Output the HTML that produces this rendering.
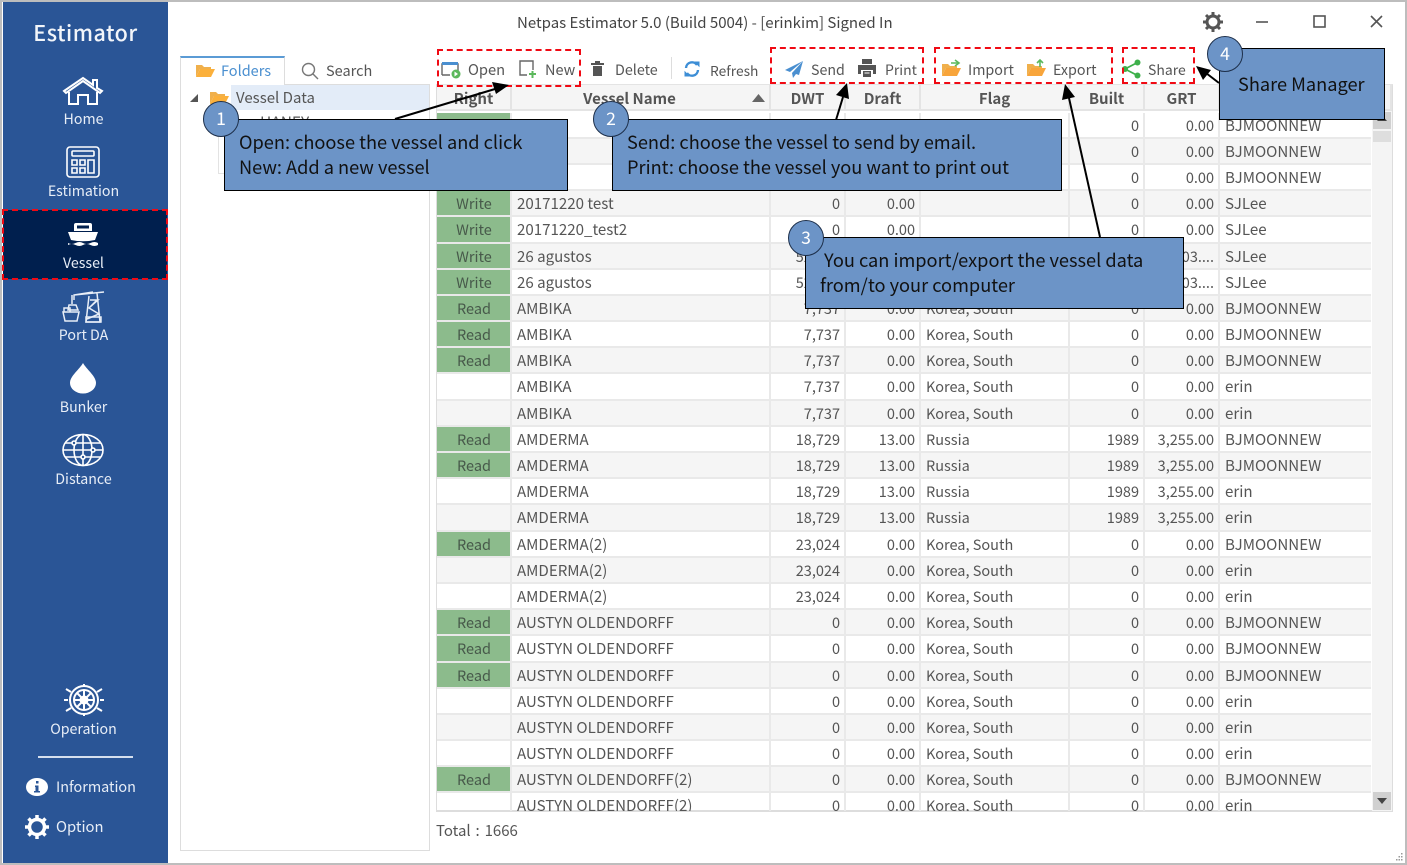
<!DOCTYPE html>
<html><head><meta charset="utf-8"><style>
*{box-sizing:border-box}
html,body{margin:0;padding:0;width:1407px;height:865px;overflow:hidden;background:#fff}
body{position:relative;font-family:"Noto Sans CJK KR","Liberation Sans",sans-serif;color:#555;font-size:14.5px}
.abs{position:absolute;white-space:nowrap;line-height:20px}
#win{position:absolute;left:0;top:0;width:1407px;height:865px;border:2px solid #bdbdbd;pointer-events:none;z-index:1}
#side{position:absolute;left:3px;top:1px;width:165px;height:862px;background:#2a5596}
.nav{position:absolute;left:1px;width:165px;text-align:center;color:#e8eef7;font-size:14.2px;line-height:18px}
#sel{position:absolute;left:3px;top:210px;width:164px;height:69px;background:#001f4e}
svg{position:absolute;overflow:visible}
#rows{position:absolute;left:437px;top:112.6px;width:934px;height:698.400px;overflow:hidden}
.r{height:26.2px;position:relative;border-bottom:2px solid #e9e9e9;line-height:25.400px;white-space:nowrap}
.r:nth-child(even){background:#f5f5f5}
.r span{position:absolute;top:0;height:24.2px;border-right:2px solid #e9e9e9;padding:0 5px;overflow:hidden;display:block}
.a{left:0;width:75px;text-align:center;padding-left:6px!important}
.g .a{background:#8cbb8c;color:#47594a}
.b{left:75px;width:259px;font-size:15.1px;line-height:24.5px}
.c{left:334px;width:75px;text-align:right;padding-right:4px!important}
.d{left:409px;width:75px;text-align:right;padding-right:4px!important}
.e{left:484px;width:149px}
.f{left:633px;width:75px;text-align:right;padding-right:4px!important}
.h{left:708px;width:75px;text-align:right;padding-right:4px!important}
.i{left:783px;width:151px;border-right:0!important;font-size:15.1px;line-height:24.5px}
.hd{position:absolute;top:85px;height:26px;background:#f5f5f5;border-right:2px solid #e4e4e4;border-bottom:2px solid #e4e4e4;text-align:center;font-weight:700;font-size:15px;line-height:27px;color:#555}
.co{position:absolute;background:#6c94c7;border:1.5px solid #000;color:#111;font-size:18.2px;line-height:25.500px;white-space:nowrap;z-index:5}
.ci{position:absolute;width:36px;height:36px;border-radius:50%;background:#6c94c7;border:1.5px solid #1d2f4a;color:#fff;text-align:center;font-size:17.6px;line-height:33px;z-index:6}
.rd{position:absolute;border:2px dashed #f00a14;z-index:4}
</style></head><body>
<div id="side"></div><div id="sel"></div>
<div class="abs" style="left:3px;width:165px;text-align:center;top:20px;line-height:26px;color:#f2f5fa;font-size:21.5px;font-weight:500;letter-spacing:.5px">Estimator</div>

<svg style="left:62px;top:76px" width="42" height="30" fill="none" stroke="#fff" stroke-width="2"><path d="M2 15 21 2l10 7V4h4v8l5 3-2 2-17-12L4 17zM7 16v12h9v-9h10v9h9V16"/></svg>
<div class="nav" style="top:110px">Home</div>
<svg style="left:66px;top:146px" width="34" height="32" fill="none" stroke="#fff" stroke-width="1.6"><rect x="1" y="1" width="32" height="30" rx="3"/><rect x="6" y="5" width="22" height="5" rx="1"/><path d="M6 14h5v5H6zM14 14h5v5h-5zM6 22h5v5H6zM14 22h5v5h-5zM22 14h6v13h-6z"/></svg>
<div class="nav" style="top:182px">Estimation</div>
<svg style="left:67px;top:222px" width="32" height="26" fill="#fff"><path d="M7 9V3q0-2 2-2h14q2 0 2 2v6H7zM10 3.500v3h12v-3z" fill-rule="evenodd"/><path d="M1 10h30l-3 8q-12 2.500-24 0z"/><path d="M1 21q3.500 2 7.500 0t7.500 0 7.500 0 7.500 0v2q-3.500 2-7.500 0t-7.500 0-7.500 0-7.500 0z"/></svg>
<div class="nav" style="top:254px">Vessel</div>
<svg style="left:62px;top:290px" width="44" height="34" fill="none" stroke="#e8eef7" stroke-width="1.5"><path d="M12 10V5l30-3M12 5l19-3M10 5v9M7 15h7l2 5H6zM27 6l-3 26h14L35 3M28 10h8l-9 8 10 6-12 5M35 10l-8 8"/><path d="M2 22v-4h6v4M1 22h16l-2 9H3zM24 27h15v5H24z"/></svg>
<div class="nav" style="top:326px">Port DA</div>
<svg style="left:69px;top:362px" width="28" height="32" fill="#fff"><path d="M14 1C10 8 1 14 1 21a13 10.500 0 0 0 26 0C27 14 18 8 14 1z"/></svg>
<div class="nav" style="top:398px">Bunker</div>
<svg style="left:62px;top:434px" width="42" height="32" fill="none" stroke="#fff" stroke-width="1.6"><ellipse cx="21" cy="16" rx="20" ry="15.500"/><ellipse cx="21" cy="16" rx="9" ry="15.500"/><path d="M21 0v32M3 9h36M1 16h40M3 23h36"/><circle cx="12" cy="9" r="2" fill="#2a5596"/><circle cx="31" cy="16" r="2" fill="#2a5596"/><circle cx="21" cy="23" r="2" fill="#2a5596"/></svg>
<div class="nav" style="top:470px">Distance</div>
<svg style="left:63px;top:684px" width="42" height="32" fill="none" stroke="#fff" stroke-width="2"><circle cx="21" cy="16" r="14"/><circle cx="21" cy="16" r="10"/><circle cx="21" cy="16" r="3.500"/><path d="M21 6v20M11 16h20M14 9l14 14M28 9 14 23M21 0v3M21 29v3M3 5l5 3M39 5l-5 3M3 27l5-3M39 27l-5-3M1 16h4M37 16h4"/></svg>
<div class="nav" style="top:720px">Operation</div>
<div style="position:absolute;left:38px;top:756px;width:95px;height:2px;background:#d5dfee"></div>
<svg style="left:26px;top:778px" width="22" height="18"><ellipse cx="11" cy="9" rx="11" ry="9" fill="#fff"/><path d="M9 7.500h3.500V13H14v1.500H8V13h1.500V9H9zM10 3h2.500v2.500H10z" fill="#2a5596"/></svg>
<div class="abs" style="left:56px;top:777px;color:#e8eef7;font-size:14.400px">Information</div>
<svg style="left:24px;top:815px" width="26" height="24" fill="none" stroke="#fff" stroke-width="3.500"><circle cx="13" cy="12" r="7.500"/><path stroke-width="3.500" d="M13 0v4M13 20v4M1 12h4M21 12h4M4.500 3.500l3 3M18.500 17.500l3 3M4.500 20.500l3-3M18.500 6.500l3-3"/></svg>
<div class="abs" style="left:56px;top:817px;color:#e8eef7;font-size:14.800px">Option</div>

<div class="abs" style="left:517px;top:13px;color:#444;font-size:15px">Netpas Estimator 5.0 (Build 5004) - [erinkim] Signed In</div>
<svg style="left:1202px;top:11px" width="22" height="22" fill="none" stroke="#555" stroke-width="3"><circle cx="11" cy="11" r="6"/><path d="M11 1v4M11 17v4M1 11h4M17 11h4M4 4l3 3M15 15l3 3M4 18l3-3M15 7l3-3"/></svg>
<svg style="left:1255px;top:14px" width="130" height="16" fill="none" stroke="#555" stroke-width="1.600"><path d="M1 8h12"/><rect x="59" y="2" width="11" height="11"/><path d="M116 2l11 11M127 2l-11 11"/></svg>

<div style="position:absolute;left:180px;top:84px;width:250px;height:767px;border:1px solid #ddd"></div>
<div style="position:absolute;left:180px;top:56px;width:105px;height:29px;background:#fff;border:1px solid #ddd;border-top:2px solid #5b9bd5;border-bottom:0"></div>
<svg style="left:196px;top:63px" width="19" height="15"><path d="M0 2h6l2 2h7v2H4L0 14z" fill="#f0b04c"/><path d="M4 6h15l-4 8H0z" fill="#fbb03b"/></svg>
<div class="abs" style="left:221px;top:61px;color:#4a8fd0">Folders</div>
<svg style="left:301px;top:62px" width="18" height="18" fill="none" stroke="#777" stroke-width="1.400"><circle cx="7.500" cy="7.500" r="6"/><path d="M12 12l5 5"/></svg>
<div class="abs" style="left:326px;top:61px">Search</div>
<svg style="left:189px;top:93px" width="10" height="10"><path d="M9 1v8H1z" fill="#555"/></svg>
<svg style="left:210px;top:90px" width="19" height="15"><path d="M0 2h6l2 2h7v2H4L0 14z" fill="#f0b04c"/><path d="M4 6h15l-4 8H0z" fill="#fbb03b"/></svg>
<div style="position:absolute;left:231px;top:85px;width:198px;height:25px;background:#e3ecf8"></div>
<div class="abs" style="left:236px;top:88px;font-size:15px">Vessel Data</div>
<div style="position:absolute;left:218px;top:130px;width:8px;height:44px;border:1px solid #e3e3e3;border-right:0"></div>
<div class="abs" style="left:260px;top:112px;height:9px;overflow:hidden;font-size:15.500px">HANEY</div>

<svg style="left:441px;top:61px" width="20" height="18" fill="none"><path d="M1 14V3h16v7M1 14h8" stroke="#666" stroke-width="1.400"/><path d="M1 2.500h16" stroke="#4a8fd0" stroke-width="3"/><circle cx="15" cy="13" r="4.500" fill="#5cb85c"/><path d="M13.500 10.500v5l3.500-2.500z" fill="#fff"/></svg>
<div class="abs" style="left:468px;top:60px;font-size:14.700px">Open</div>
<svg style="left:519px;top:60px" width="18" height="19" fill="none"><path d="M8 15H1V1h13v9" stroke="#666" stroke-width="1.400"/><path d="M10 14h7M13.500 11v7" stroke="#5cb85c" stroke-width="2"/></svg>
<div class="abs" style="left:545px;top:60px">New</div>
<svg style="left:591px;top:61px" width="14" height="16" fill="#555"><path d="M0 2h13v2H0zM4 0h5v2H4zM2 5h9v10H2z"/></svg>
<div class="abs" style="left:615px;top:60px;font-size:14.300px">Delete</div>
<div style="position:absolute;left:671px;top:57px;width:1px;height:22px;background:#ddd"></div>
<svg style="left:684px;top:61px" width="16" height="16" fill="none" stroke="#3d8ed6" stroke-width="2.400"><path d="M2 7a6 6 0 0 1 11-3M14 9a6 6 0 0 1-11 3"/><path d="M11 1h4v4zM5 15H1v-4z" fill="#3d8ed6" stroke-width="1"/></svg>
<div class="abs" style="left:710px;top:60px;font-size:13.800px">Refresh</div>
<svg style="left:785px;top:61px" width="18" height="17"><path d="M18 0 0 9l5 2zM18 0 7 12l1 5 3-4 3 1z" fill="#4a8fd0"/></svg>
<div class="abs" style="left:811px;top:60px;font-size:14.200px">Send</div>
<svg style="left:858px;top:59px" width="18" height="19" fill="#555"><path fill-rule="evenodd" d="M4 0h10v5H4zM0 6h18v9h-3v-4H3v4H0zM5 12h8v6H5zM6.500 13.500v1h5v-1z"/></svg>
<div class="abs" style="left:885px;top:60px;font-size:14px">Print</div>
<svg style="left:942px;top:60px" width="19" height="17"><path d="M0 4h6l2 2h7v2H4L0 16z" fill="#f0b04c"/><path d="M4 8h15l-4 8H0z" fill="#f8a53b"/><path d="M9 3h7M13 0l4 3-4 3" stroke="#5cb85c" stroke-width="1.600" fill="none"/></svg>
<div class="abs" style="left:968px;top:60px;font-size:14.300px">Import</div>
<svg style="left:1027px;top:60px" width="19" height="17"><path d="M0 4h6l2 2h7v2H4L0 16z" fill="#f0b04c"/><path d="M4 8h15l-4 8H0z" fill="#f8a53b"/><path d="M13 7V1M10 3l3-3 3 3" stroke="#5cb85c" stroke-width="1.600" fill="none"/></svg>
<div class="abs" style="left:1053px;top:60px;font-size:14.300px">Export</div>
<svg style="left:1122px;top:59px" width="20" height="20" fill="#3eb04b"><circle cx="3" cy="10" r="3"/><circle cx="15.500" cy="3.500" r="3"/><circle cx="15.500" cy="16.500" r="3"/><path d="M3 10 15.500 3.500M3 10l12.500 6.500" stroke="#3eb04b" stroke-width="1.800"/></svg>
<div class="abs" style="left:1148px;top:60px;font-size:14px">Share</div>

<div style="position:absolute;left:436px;top:84px;width:957px;height:728px;border:1px solid #ddd;border-top:2px solid #e4e4e4;border-bottom:2px solid #ddd"></div>
<div class="hd" style="left:437px;width:75px">Right</div>
<div class="hd" style="left:512px;width:259px;padding-right:22px">Vessel Name</div>
<svg style="left:752px;top:94px" width="13" height="8"><path d="M0 8 6.500 0 13 8z" fill="#666"/></svg>
<div class="hd" style="left:771px;width:75px">DWT</div>
<div class="hd" style="left:846px;width:75px">Draft</div>
<div class="hd" style="left:921px;width:149px">Flag</div>
<div class="hd" style="left:1070px;width:75px">Built</div>
<div class="hd" style="left:1145px;width:75px">GRT</div>
<div class="hd" style="left:1220px;width:172px"></div>

<div id="rows">
<div class="r g"><span class="a">Read</span><span class="b">2017</span><span class="c">0</span><span class="d">0.00</span><span class="e"></span><span class="f">0</span><span class="h">0.00</span><span class="i">BJMOONNEW</span></div>
<div class="r g"><span class="a">Read</span><span class="b">2017</span><span class="c">0</span><span class="d">0.00</span><span class="e"></span><span class="f">0</span><span class="h">0.00</span><span class="i">BJMOONNEW</span></div>
<div class="r"><span class="a"></span><span class="b">2017</span><span class="c">0</span><span class="d">0.00</span><span class="e"></span><span class="f">0</span><span class="h">0.00</span><span class="i">BJMOONNEW</span></div>
<div class="r g"><span class="a">Write</span><span class="b">20171220 test</span><span class="c">0</span><span class="d">0.00</span><span class="e"></span><span class="f">0</span><span class="h">0.00</span><span class="i">SJLee</span></div>
<div class="r g"><span class="a">Write</span><span class="b">20171220_test2</span><span class="c">0</span><span class="d">0.00</span><span class="e"></span><span class="f">0</span><span class="h">0.00</span><span class="i">SJLee</span></div>
<div class="r g"><span class="a">Write</span><span class="b">26 agustos</span><span class="c">52,000</span><span class="d">0.00</span><span class="e"></span><span class="f">0</span><span class="h">03....</span><span class="i">SJLee</span></div>
<div class="r g"><span class="a">Write</span><span class="b">26 agustos</span><span class="c">52,000</span><span class="d">0.00</span><span class="e"></span><span class="f">0</span><span class="h">03....</span><span class="i">SJLee</span></div>
<div class="r g"><span class="a">Read</span><span class="b">AMBIKA</span><span class="c">7,737</span><span class="d">0.00</span><span class="e">Korea, South</span><span class="f">0</span><span class="h">0.00</span><span class="i">BJMOONNEW</span></div>
<div class="r g"><span class="a">Read</span><span class="b">AMBIKA</span><span class="c">7,737</span><span class="d">0.00</span><span class="e">Korea, South</span><span class="f">0</span><span class="h">0.00</span><span class="i">BJMOONNEW</span></div>
<div class="r g"><span class="a">Read</span><span class="b">AMBIKA</span><span class="c">7,737</span><span class="d">0.00</span><span class="e">Korea, South</span><span class="f">0</span><span class="h">0.00</span><span class="i">BJMOONNEW</span></div>
<div class="r"><span class="a"></span><span class="b">AMBIKA</span><span class="c">7,737</span><span class="d">0.00</span><span class="e">Korea, South</span><span class="f">0</span><span class="h">0.00</span><span class="i">erin</span></div>
<div class="r"><span class="a"></span><span class="b">AMBIKA</span><span class="c">7,737</span><span class="d">0.00</span><span class="e">Korea, South</span><span class="f">0</span><span class="h">0.00</span><span class="i">erin</span></div>
<div class="r g"><span class="a">Read</span><span class="b">AMDERMA</span><span class="c">18,729</span><span class="d">13.00</span><span class="e">Russia</span><span class="f">1989</span><span class="h">3,255.00</span><span class="i">BJMOONNEW</span></div>
<div class="r g"><span class="a">Read</span><span class="b">AMDERMA</span><span class="c">18,729</span><span class="d">13.00</span><span class="e">Russia</span><span class="f">1989</span><span class="h">3,255.00</span><span class="i">BJMOONNEW</span></div>
<div class="r"><span class="a"></span><span class="b">AMDERMA</span><span class="c">18,729</span><span class="d">13.00</span><span class="e">Russia</span><span class="f">1989</span><span class="h">3,255.00</span><span class="i">erin</span></div>
<div class="r"><span class="a"></span><span class="b">AMDERMA</span><span class="c">18,729</span><span class="d">13.00</span><span class="e">Russia</span><span class="f">1989</span><span class="h">3,255.00</span><span class="i">erin</span></div>
<div class="r g"><span class="a">Read</span><span class="b">AMDERMA(2)</span><span class="c">23,024</span><span class="d">0.00</span><span class="e">Korea, South</span><span class="f">0</span><span class="h">0.00</span><span class="i">BJMOONNEW</span></div>
<div class="r"><span class="a"></span><span class="b">AMDERMA(2)</span><span class="c">23,024</span><span class="d">0.00</span><span class="e">Korea, South</span><span class="f">0</span><span class="h">0.00</span><span class="i">erin</span></div>
<div class="r"><span class="a"></span><span class="b">AMDERMA(2)</span><span class="c">23,024</span><span class="d">0.00</span><span class="e">Korea, South</span><span class="f">0</span><span class="h">0.00</span><span class="i">erin</span></div>
<div class="r g"><span class="a">Read</span><span class="b">AUSTYN OLDENDORFF</span><span class="c">0</span><span class="d">0.00</span><span class="e">Korea, South</span><span class="f">0</span><span class="h">0.00</span><span class="i">BJMOONNEW</span></div>
<div class="r g"><span class="a">Read</span><span class="b">AUSTYN OLDENDORFF</span><span class="c">0</span><span class="d">0.00</span><span class="e">Korea, South</span><span class="f">0</span><span class="h">0.00</span><span class="i">BJMOONNEW</span></div>
<div class="r g"><span class="a">Read</span><span class="b">AUSTYN OLDENDORFF</span><span class="c">0</span><span class="d">0.00</span><span class="e">Korea, South</span><span class="f">0</span><span class="h">0.00</span><span class="i">BJMOONNEW</span></div>
<div class="r"><span class="a"></span><span class="b">AUSTYN OLDENDORFF</span><span class="c">0</span><span class="d">0.00</span><span class="e">Korea, South</span><span class="f">0</span><span class="h">0.00</span><span class="i">erin</span></div>
<div class="r"><span class="a"></span><span class="b">AUSTYN OLDENDORFF</span><span class="c">0</span><span class="d">0.00</span><span class="e">Korea, South</span><span class="f">0</span><span class="h">0.00</span><span class="i">erin</span></div>
<div class="r"><span class="a"></span><span class="b">AUSTYN OLDENDORFF</span><span class="c">0</span><span class="d">0.00</span><span class="e">Korea, South</span><span class="f">0</span><span class="h">0.00</span><span class="i">erin</span></div>
<div class="r g"><span class="a">Read</span><span class="b">AUSTYN OLDENDORFF(2)</span><span class="c">0</span><span class="d">0.00</span><span class="e">Korea, South</span><span class="f">0</span><span class="h">0.00</span><span class="i">BJMOONNEW</span></div>
<div class="r"><span class="a"></span><span class="b">AUSTYN OLDENDORFF(2)</span><span class="c">0</span><span class="d">0.00</span><span class="e">Korea, South</span><span class="f">0</span><span class="h">0.00</span><span class="i">erin</span></div>
</div>

<div style="position:absolute;left:1372px;top:111px;width:20px;height:700px;background:#f4f4f4"></div>
<div style="position:absolute;left:1373px;top:112px;width:18px;height:17px;background:#d0d0d0"></div>
<div style="position:absolute;left:1373px;top:131px;width:18px;height:11px;background:#dedede"></div>
<svg style="left:1377px;top:115px" width="10" height="8"><path d="M0 6 5 0l5 6z" fill="#444"/></svg>
<div style="position:absolute;left:1373px;top:792px;width:18px;height:18px;background:#d0d0d0"></div>
<svg style="left:1377px;top:798px" width="10" height="6"><path d="M0 0h10L5 6z" fill="#444"/></svg>
<div class="abs" style="left:436px;top:821px;font-size:15px;word-spacing:1.500px">Total : 1666</div>
<svg style="left:1394px;top:853px" width="10" height="9" fill="#999"><path d="M7 0h1.500v1.500H7zM4.500 3H6v1.500H4.500zM7 3h1.500v1.500H7zM2 6h1.500v1.500H2zM4.500 6H6v1.500H4.500zM7 6h1.500v1.500H7z"/></svg>

<div class="rd" style="left:437px;top:49px;width:144px;height:38px"></div>
<div class="rd" style="left:770px;top:47px;width:154px;height:37px"></div>
<div class="rd" style="left:934px;top:47px;width:179px;height:37px"></div>
<div class="rd" style="left:1122px;top:47px;width:73px;height:37px"></div>
<div class="rd" style="left:2px;top:209px;width:166px;height:71px"></div>

<svg style="left:0;top:0;z-index:4" width="1407" height="865" fill="#000" stroke="#000" stroke-width="2">
<path d="M395 119 495 89"/><path stroke="none" d="M509 85 492 82 496 94z"/>
<path d="M836 120 843 97"/><path stroke="none" d="M847 83 836 95 849 99z"/>
<path d="M1100 237 1069 98"/><path stroke="none" d="M1065 84 1062 100 1075 97z"/>
<path d="M1219 83 1206 73"/><path stroke="none" d="M1196 66 1203 80 1211 70z"/>
</svg>

<div class="co" style="left:224px;top:119px;width:344px;height:72px;padding:9.500px 0 0 14px">Open: choose the vessel and click<br>New: Add a new vessel</div>
<div class="co" style="left:612px;top:119px;width:450px;height:72px;padding:9.500px 0 0 14px">Send: choose the vessel to send by email.<br>Print: choose the vessel you want to print out</div>
<div class="co" style="left:805px;top:237px;width:379px;height:72px;padding:9.500px 0 0 14px"><span style="margin-left:4px">You can import/export the vessel data</span><br>from/to your computer</div>
<div class="co" style="left:1219px;top:48px;width:166px;height:72px;padding:23px 0 0 18px">Share Manager</div>
<div class="ci" style="left:203px;top:101px">1</div>
<div class="ci" style="left:593px;top:101px">2</div>
<div class="ci" style="left:788px;top:220px">3</div>
<div class="ci" style="left:1207px;top:36px">4</div>
<div id="win"></div>
</body></html>
